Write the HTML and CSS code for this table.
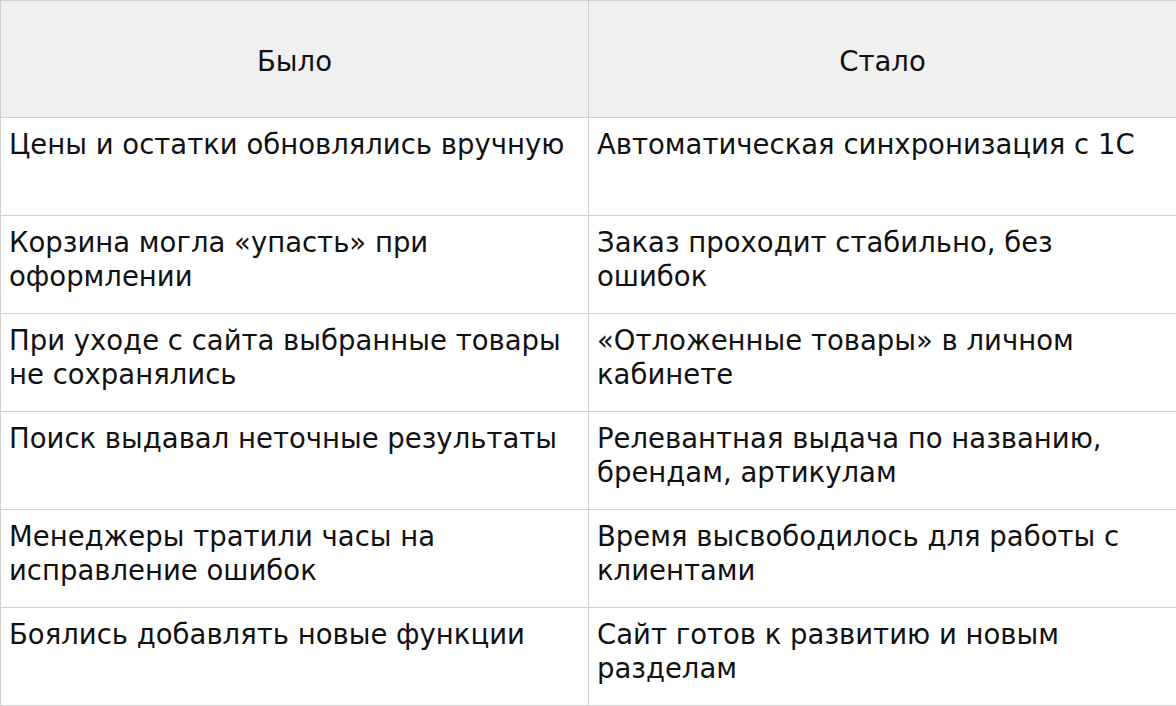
FILE: index.html
```html
<!DOCTYPE html>
<html lang="ru">
<head>
<meta charset="utf-8">
<link rel="stylesheet" href="styles.css">
</head>
<body>
<table class="cmp">
  <thead>
    <tr class="head-row"><th>Было</th><th>Стало</th></tr>
  </thead>
  <tbody>
    <tr><td>Цены и остатки обновлялись вручную</td><td>Автоматическая синхронизация с 1С</td></tr>
    <tr><td>Корзина могла «упасть» при оформлении</td><td>Заказ проходит стабильно, без ошибок</td></tr>
    <tr><td>При уходе с сайта выбранные товары не сохранялись</td><td>«Отложенные товары» в личном кабинете</td></tr>
    <tr><td>Поиск выдавал неточные результаты</td><td>Релевантная выдача по названию, брендам, артикулам</td></tr>
    <tr><td>Менеджеры тратили часы на исправление ошибок</td><td>Время высвободилось для работы с клиентами</td></tr>
    <tr><td>Боялись добавлять новые функции</td><td>Сайт готов к развитию и новым разделам</td></tr>
  </tbody>
</table>
</body>
</html>
```
FILE: styles.css
```css
html, body {
  margin: 0;
  padding: 0;
  background: #fff;
}
body {
  font-family: "DejaVu Sans", sans-serif;
  font-size: 27.5px;
  line-height: 33.5px;
  color: #111;
  overflow: hidden;
}
.cmp {
  width: 1177px;
  border-collapse: collapse;
  table-layout: fixed;
}
.cmp th, .cmp td {
  border: 1px solid #d0d0d0;
  padding: 10px 10px 8px 8px;
  vertical-align: top;
  text-align: left;
  font-weight: normal;
}
.cmp th {
  background: #f0f0f0;
  text-align: center;
  vertical-align: middle;
  padding: 13px 9px 7px;
  height: 96px;
}
.cmp td {
  height: 79px;
}
```
